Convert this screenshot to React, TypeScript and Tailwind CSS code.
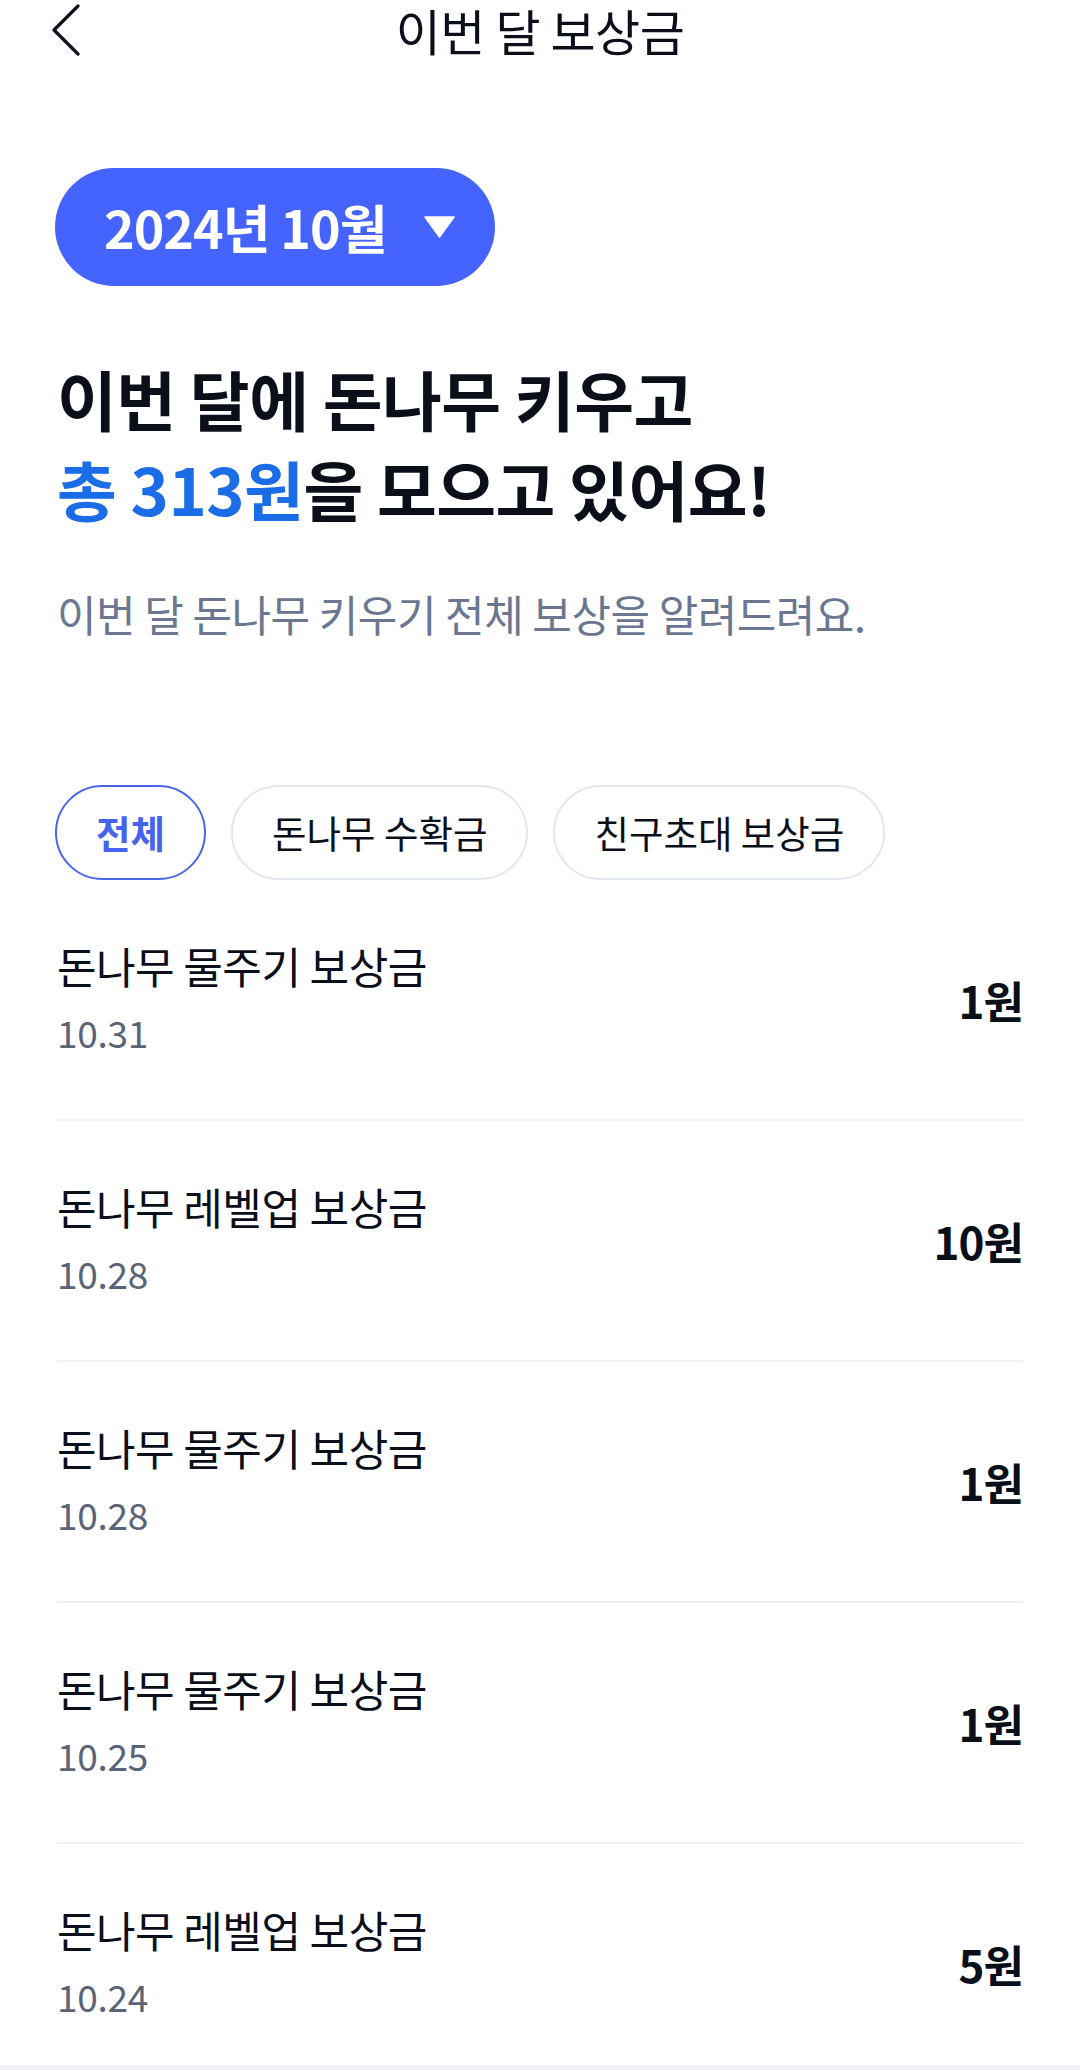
import React from "react";

const rows = [
  { title: "돈나무 물주기 보상금", date: "10.31", amount: "1원" },
  { title: "돈나무 레벨업 보상금", date: "10.28", amount: "10원" },
  { title: "돈나무 물주기 보상금", date: "10.28", amount: "1원" },
  { title: "돈나무 물주기 보상금", date: "10.25", amount: "1원" },
  { title: "돈나무 레벨업 보상금", date: "10.24", amount: "5원" },
];

export default function App() {
  return (
    <div
      className="w-[1080px] min-h-[2070px] bg-white flex flex-col text-[#0b0f1a]"
      style={{ fontFamily: '"Noto Sans CJK KR", "Noto Sans", sans-serif' }}
    >
      {/* Header */}
      <header className="relative h-[60px] flex items-center justify-center shrink-0">
        <button className="absolute left-[44px] top-0 h-[60px] w-[44px] flex items-center justify-center">
          <svg width="30" height="52" viewBox="0 0 30 52" fill="none">
            <path d="M27 2 L3 26 L27 50" stroke="#0b0f1a" strokeWidth="3.2" strokeLinecap="round" strokeLinejoin="round" />
          </svg>
        </button>
        <h1 className="text-[49px] leading-[60px] font-normal tracking-[-0.5px]">이번 달 보상금</h1>
      </header>

      <main className="flex flex-col px-[57px]">
        {/* Month selector */}
        <div className="mt-[108px] h-[118px] w-[440px] -ml-[2px] rounded-full bg-[#4563ff] flex items-center justify-between pl-[49px] pr-[40px]">
          <span className="text-white font-bold text-[52px] leading-none tracking-[-1px]">2024년 10월</span>
          <svg width="31" height="22" viewBox="0 0 31 22">
            <path d="M1 1 H30 L15.5 21 Z" fill="#ffffff" stroke="#ffffff" strokeWidth="1.5" strokeLinejoin="round" />
          </svg>
        </div>

        {/* Headline */}
        <div className="mt-[67px] text-[65px] leading-[90px] font-bold tracking-[-0.5px]">
          <p>이번 달에 돈나무 키우고</p>
          <p>
            <span className="text-[#1a6de6]">총 313원</span>을 모으고 있어요!
          </p>
        </div>

        <p className="mt-[52px] text-[43px] leading-[56px] text-[#6b7790] tracking-[-0.5px]">
          이번 달 돈나무 키우기 전체 보상을 알려드려요.
        </p>

        {/* Chips */}
        <div className="mt-[144px] flex gap-[25px] -ml-[2px]">
          <div className="h-[95px] px-[39px] rounded-full border-2 border-[#4a67e8] flex items-center text-[37.5px] font-bold text-[#4563f0]">
            전체
          </div>
          <div className="h-[95px] px-[39px] rounded-full border-2 border-[#e2e6f0] flex items-center text-[37.5px] text-[#0b0f1a]">
            돈나무 수확금
          </div>
          <div className="h-[95px] px-[39px] rounded-full border-2 border-[#e2e6f0] flex items-center text-[37.5px] text-[#0b0f1a]">
            친구초대 보상금
          </div>
        </div>

        {/* List */}
        <ul className="flex flex-col">
          {rows.map((r, i) => (
            <li
              key={i}
              className={
                i < rows.length - 1
                  ? "h-[241px] border-b-2 border-[#eef0f4] flex items-center justify-between"
                  : "h-[239px] -mb-[18px] flex items-center justify-between"
              }
            >
              <div className="flex flex-col gap-[17px] mb-[8px]">
                <span className="text-[43px] leading-[56px] tracking-[-0.5px]">{r.title}</span>
                <span className="text-[37px] leading-[44px] text-[#5a6377] tracking-[-0.3px]">{r.date}</span>
              </div>
              <span className="text-[44px] leading-[56px] font-bold tracking-[-1px]">{r.amount}</span>
            </li>
          ))}
        </ul>
      </main>
      <div className="flex-1 bg-[#f2f3f6] min-h-[4px]" />
    </div>
  );
}
